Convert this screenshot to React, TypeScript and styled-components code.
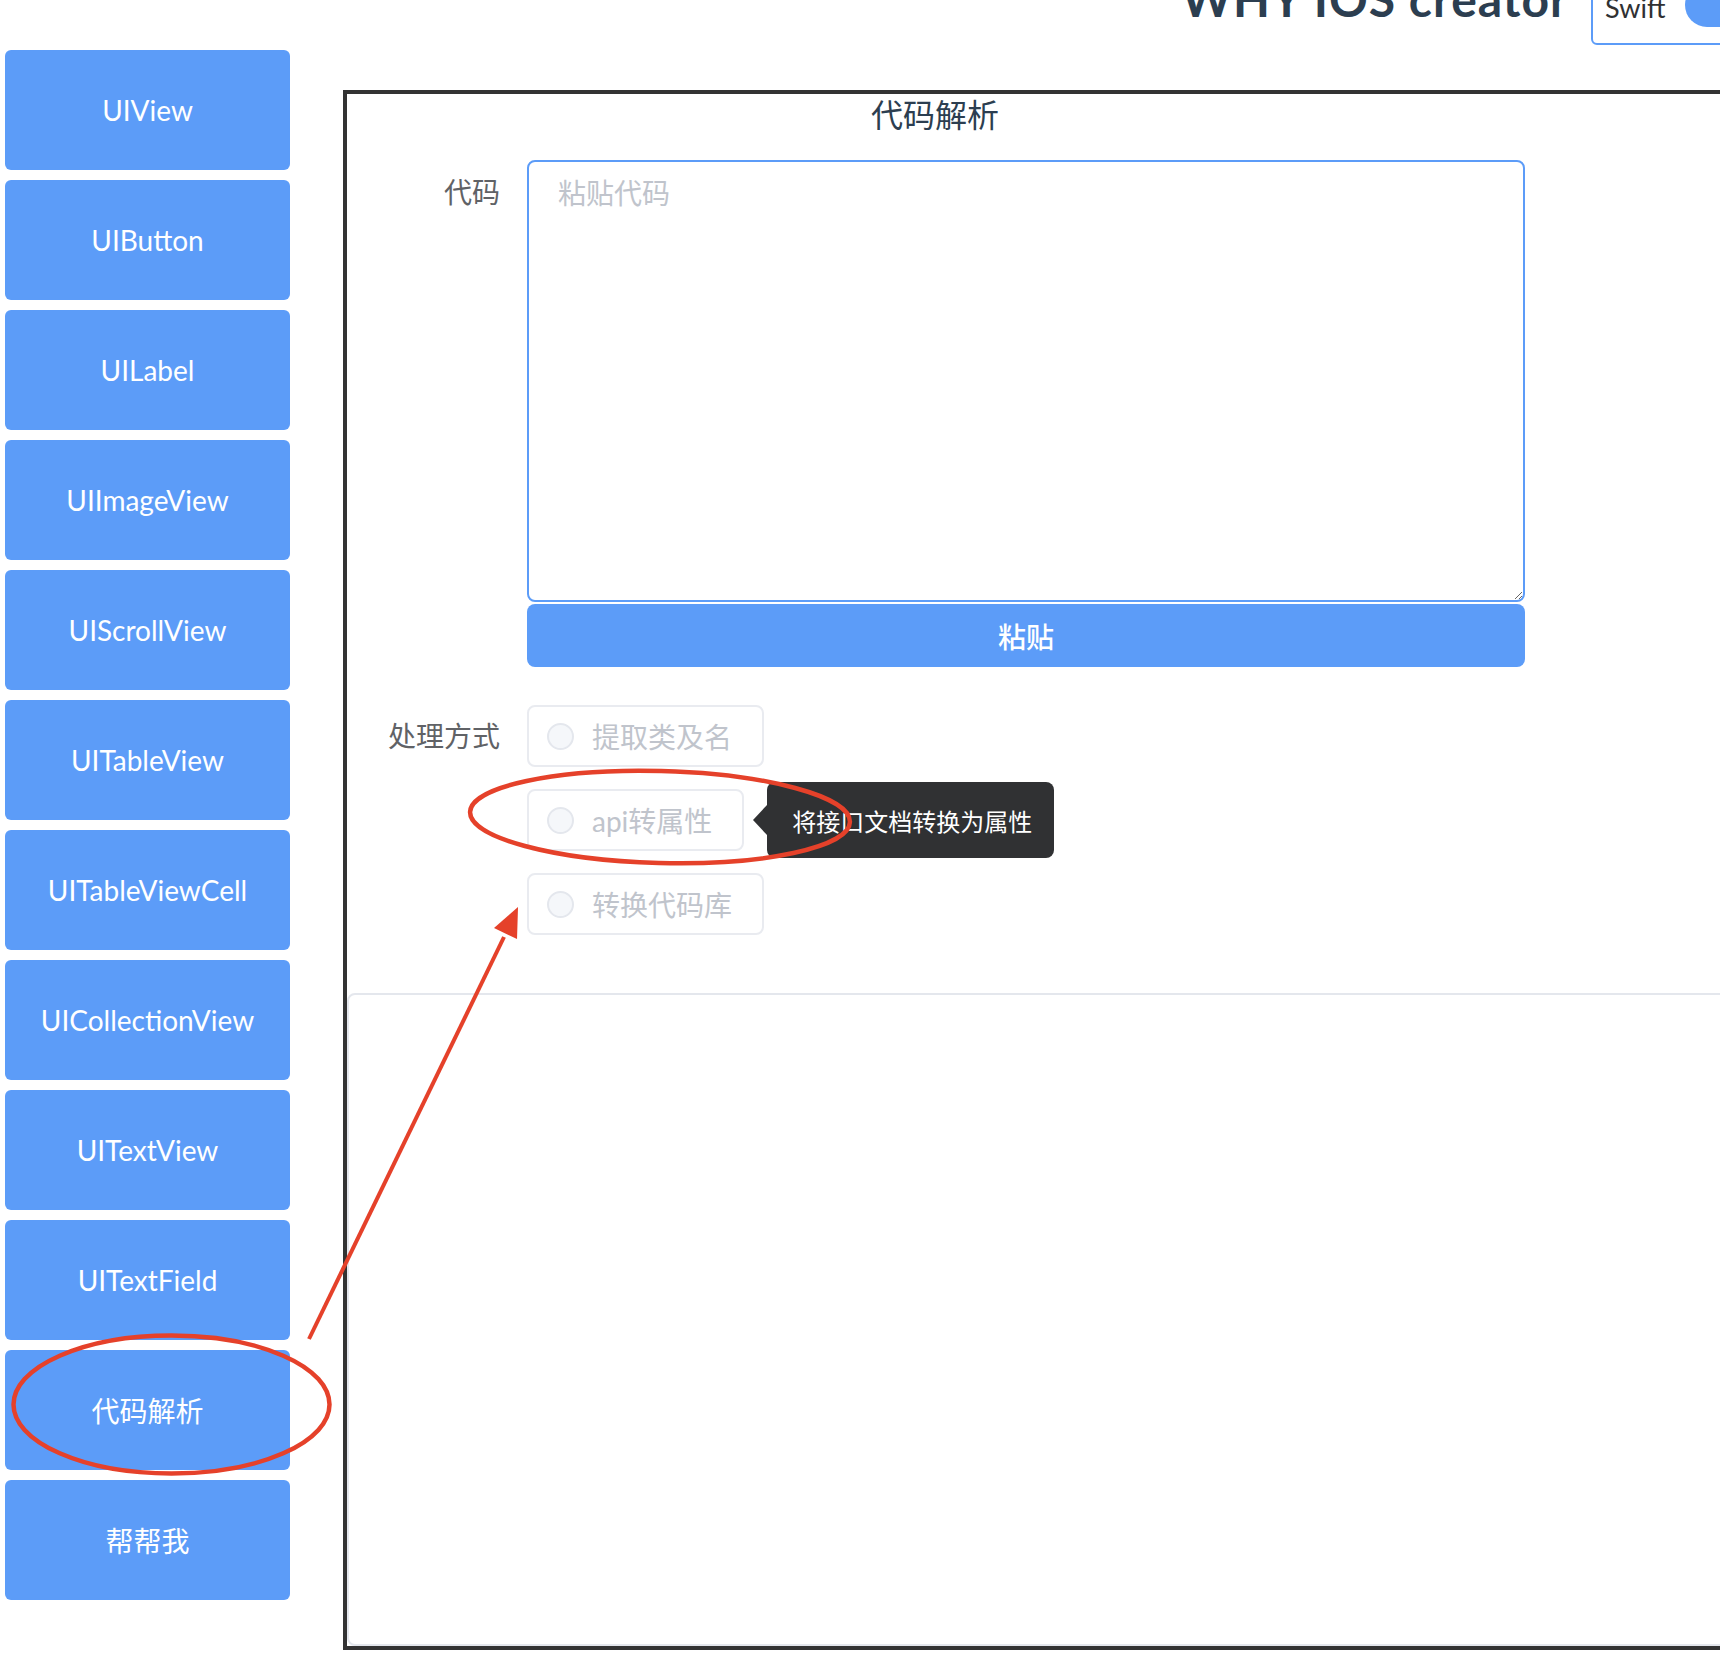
import React from "react";
import styled, { createGlobalStyle } from "styled-components";

const FONT = `Lato, "Noto Sans CJK SC", sans-serif`;
const BLUE = "#5c9cf8";

const GlobalStyle = createGlobalStyle`
  html, body { margin: 0; padding: 0; background: #fff; }
  body { overflow: hidden; font-family: ${FONT}; }
  * { box-sizing: border-box; }
`;

const Page = styled.div`
  position: relative;
  width: 1720px;
  height: 1662px;
  overflow: hidden;
  color: #2c3e50;
  font-family: ${FONT};
`;

const Header = styled.header`
  display: flex;
  justify-content: flex-end;
  align-items: flex-start;
  width: 1831px;
  height: 45px;
`;

const Heading = styled.h1`
  margin: -25px 22px 0 0;
  font-size: 48px;
  line-height: 48px;
  font-weight: 700;
  letter-spacing: 1px;
  color: #2c3e50;
  white-space: nowrap;
`;

const LangBox = styled.div`
  display: flex;
  align-items: flex-start;
  gap: 20px;
  width: 240px;
  height: 65px;
  margin-top: -20px;
  padding-left: 12px;
  border: 2px solid ${BLUE};
  border-radius: 6px;
`;

const LangText = styled.span`
  margin-top: 12px;
  font-size: 27px;
  line-height: 27px;
  color: #303133;
`;

const LangToggle = styled.span`
  margin-top: 1px;
  width: 90px;
  height: 44px;
  border-radius: 22px;
  background: ${BLUE};
`;

const Body = styled.div`
  display: flex;
  align-items: flex-start;
`;

const Sidebar = styled.nav`
  display: flex;
  flex-direction: column;
  gap: 10px;
  width: 285px;
  flex-shrink: 0;
  margin: 5px 0 0 5px;
`;

const NavButton = styled.button`
  height: 120px;
  border: none;
  border-radius: 6px;
  background: ${BLUE};
  color: #fff;
  font-family: ${FONT};
  font-size: 28px;
  padding: 0;
`;

const Panel = styled.main`
  display: flex;
  flex-direction: column;
  flex-shrink: 0;
  width: 1500px;
  height: 1560px;
  margin: 45px 0 0 53px;
  border: 4px solid #333;
`;

const Title = styled.h2`
  width: 1176px;
  margin: 1px 0 0;
  font-size: 32px;
  line-height: 40px;
  font-weight: 400;
  text-align: center;
  color: #2c3e50;
`;

const Form = styled.form`
  display: flex;
  flex-direction: column;
  gap: 38px;
  margin-top: 25px;
`;

const FormRow = styled.div`
  display: flex;
  align-items: flex-start;
  gap: 27px;
`;

const Label = styled.label<{ $lh: number }>`
  width: 153px;
  flex-shrink: 0;
  text-align: right;
  font-size: 28px;
  line-height: ${(p) => p.$lh}px;
  color: #606266;
`;

const FieldColumn = styled.div`
  display: flex;
  flex-direction: column;
  gap: 2px;
  width: 998px;
`;

const CodeArea = styled.textarea`
  display: block;
  width: 998px;
  height: 442px;
  padding: 10px 29px;
  border: 2px solid ${BLUE};
  border-radius: 8px;
  outline: none;
  font-family: ${FONT};
  font-size: 28px;
  line-height: 1.5;
  color: #606266;
  resize: vertical;
  &::placeholder { color: #c0c4cc; }
`;

const PasteButton = styled.button`
  height: 63px;
  border: none;
  border-radius: 8px;
  background: ${BLUE};
  color: #fff;
  font-family: ${FONT};
  font-size: 28px;
  font-weight: 500;
`;

const RadioGroup = styled.div`
  display: flex;
  flex-direction: column;
  align-items: flex-start;
  gap: 22px;
`;

const RadioItem = styled.label`
  position: relative;
  display: inline-flex;
  align-items: center;
  gap: 18px;
  height: 62px;
  padding: 0 30px 0 18px;
  border: 2px solid #e9ebf0;
  border-radius: 8px;
  font-size: 28px;
  color: #c0c4cc;
  white-space: nowrap;
`;

const RadioCircle = styled.span`
  width: 27px;
  height: 27px;
  border-radius: 50%;
  border: 2px solid #e4e7ed;
  background: #f5f7fa;
`;

const Tooltip = styled.div`
  position: absolute;
  left: calc(100% + 25px);
  top: -9px;
  display: flex;
  align-items: center;
  height: 76px;
  padding: 0 22px 0 25px;
  border-radius: 8px;
  background: #303133;
  color: #fff;
  font-size: 24px;
  white-space: nowrap;
  &::before {
    content: "";
    position: absolute;
    left: -14px;
    top: 50%;
    margin-top: -15px;
    border-style: solid;
    border-width: 15px 14px 15px 0;
    border-color: transparent #303133 transparent transparent;
  }
`;

const ResultBox = styled.section`
  flex: 1;
  margin-top: 58px;
  border: 2px solid #e4e7ed;
  border-radius: 8px;
`;

const Annotations = styled.svg`
  position: absolute;
  left: 0;
  top: 0;
  pointer-events: none;
`;

const navItems = [
  "UIView",
  "UIButton",
  "UILabel",
  "UIImageView",
  "UIScrollView",
  "UITableView",
  "UITableViewCell",
  "UICollectionView",
  "UITextView",
  "UITextField",
  "代码解析",
  "帮帮我",
];

const radios = [
  { text: "提取类及名" },
  { text: "api转属性", tip: "将接口文档转换为属性" },
  { text: "转换代码库" },
];

export default function App() {
  const RED = "#e5412a";
  return (
    <Page>
      <GlobalStyle />
      <Header>
        <Heading>WHY IOS creator</Heading>
        <LangBox>
          <LangText>Swift</LangText>
          <LangToggle />
        </LangBox>
      </Header>
      <Body>
        <Sidebar>
          {navItems.map((n) => (
            <NavButton key={n}>{n}</NavButton>
          ))}
        </Sidebar>
        <Panel>
          <Title>代码解析</Title>
          <Form>
            <FormRow>
              <Label $lh={64}>代码</Label>
              <FieldColumn>
                <CodeArea placeholder="粘贴代码" />
                <PasteButton type="button">粘贴</PasteButton>
              </FieldColumn>
            </FormRow>
            <FormRow>
              <Label $lh={62}>处理方式</Label>
              <RadioGroup>
                {radios.map((r) => (
                  <RadioItem key={r.text}>
                    <RadioCircle />
                    {r.text}
                    {r.tip && <Tooltip>{r.tip}</Tooltip>}
                  </RadioItem>
                ))}
              </RadioGroup>
            </FormRow>
          </Form>
          <ResultBox />
        </Panel>
      </Body>
      <Annotations width={1720} height={1662} viewBox="0 0 1720 1662">
        <ellipse cx={660} cy={817} rx={190} ry={46} fill="none" stroke={RED} strokeWidth={4.5} transform="rotate(1.5 660 817)" />
        <ellipse cx={171.5} cy={1404.5} rx={158} ry={69} fill="none" stroke={RED} strokeWidth={4.5} />
        <line x1={309} y1={1339} x2={504} y2={937} stroke={RED} strokeWidth={4} />
        <polygon points="518,907 517,939 494,928" fill={RED} />
      </Annotations>
    </Page>
  );
}
